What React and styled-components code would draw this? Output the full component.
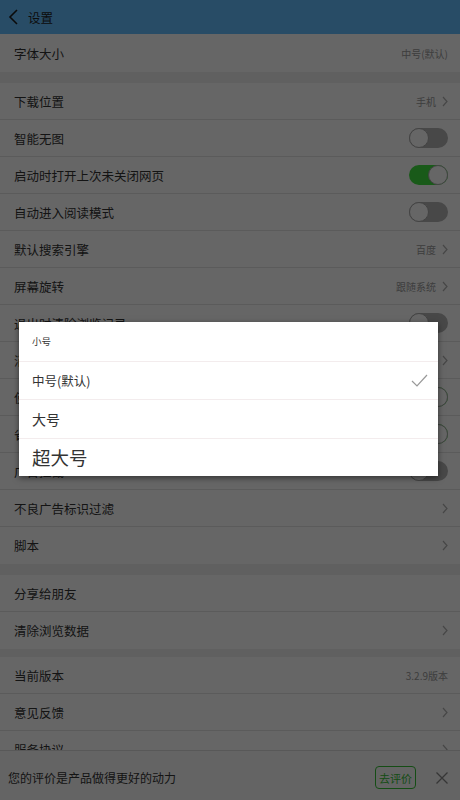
import styled, { createGlobalStyle } from "styled-components";

const GlobalStyle = createGlobalStyle`
  html, body {
    margin: 0;
    padding: 0;
  }
  body {
    width: 460px;
    height: 800px;
    overflow: hidden;
    background: #efefef;
    font-family: "Noto Sans CJK SC", "Noto Sans", sans-serif;
  }
`;

const Screen = styled.div`
  position: relative;
  width: 460px;
  height: 800px;
  display: flex;
  flex-direction: column;
  overflow: hidden;
  background: #efefef;
`;

const Header = styled.div`
  height: 34px;
  flex-shrink: 0;
  display: flex;
  align-items: center;
  gap: 10px;
  padding-left: 8px;
  background: #64bdff;
  color: #222;
  font-size: 12.5px;
  box-shadow: 0 1px 1px rgba(0, 0, 0, 0.12);
`;

const List = styled.div`
  flex: 1;
  overflow: hidden;
`;

const Section = styled.div`
  background: #fff;
  margin-bottom: ${(p) => p.$gap || 11}px;
`;

const Row = styled.div`
  box-sizing: border-box;
  height: ${(p) => (p.$tall ? 38 : 37)}px;
  display: flex;
  align-items: center;
  justify-content: space-between;
  padding: 0 12px 0 14px;
  border-bottom: 1px solid #e4e4e4;
  font-size: 12.5px;
  color: #333;

  &:last-child {
    border-bottom: none;
  }
`;

const Value = styled.span`
  display: flex;
  align-items: center;
  gap: 6px;
  font-size: 10px;
  color: #9a9a9a;
`;

const Toggle = styled.span`
  position: relative;
  width: 39px;
  height: 20px;
  border-radius: 10px;
  background: ${(p) => (p.$on ? "#3fe03f" : "#b3b3b3")};

  &::after {
    content: "";
    position: absolute;
    top: 0;
    ${(p) => (p.$on ? "right: 0;" : "left: 0;")}
    box-sizing: border-box;
    width: 20px;
    height: 20px;
    border-radius: 50%;
    background: #fff;
    border: 1px solid #a8a8a8;
  }
`;

const RateBar = styled.div`
  height: 50px;
  flex-shrink: 0;
  box-sizing: border-box;
  display: flex;
  align-items: center;
  padding: 4px 12px 0 8px;
  background: #fafafa;
  border-top: 1px solid #dcdcdc;
  font-size: 12px;
  color: #333;
`;

const RateText = styled.span`
  flex: 1;
`;

const RateButton = styled.span`
  box-sizing: border-box;
  height: 23px;
  padding: 0 3px;
  display: flex;
  align-items: center;
  border: 1.5px solid #35c035;
  border-radius: 4px;
  color: #35c035;
  font-size: 11px;
  margin-right: 20px;
`;

const Overlay = styled.div`
  position: absolute;
  inset: 0;
  background: rgba(0, 0, 0, 0.6);
`;

const Dialog = styled.div`
  position: absolute;
  left: 19px;
  top: 322px;
  width: 419px;
  background: #fff;
  box-shadow: 0 2px 6px rgba(0, 0, 0, 0.5);
`;

const Option = styled.div`
  box-sizing: border-box;
  height: 38.5px;
  display: flex;
  align-items: center;
  justify-content: space-between;
  padding: 0 10px 0 13px;
  border-top: 1px solid #f3eced;
  font-size: ${(p) => p.$size}px;
  color: #333;

  &:first-child {
    border-top: none;
  }
`;

const Chevron = () => (
  <svg width="6" height="11" viewBox="0 0 6 11">
    <polyline points="1,1 5,5.5 1,10" fill="none" stroke="#b0b0b0" strokeWidth="1.2" />
  </svg>
);

const BackIcon = () => (
  <svg width="10" height="16" viewBox="0 0 10 16">
    <polyline points="9,1 2,8 9,15" fill="none" stroke="#1d1d1d" strokeWidth="1.6" />
  </svg>
);

const Check = () => (
  <svg width="17" height="13" viewBox="0 0 17 13">
    <polyline points="1,7 6,12 16,1" fill="none" stroke="#999" strokeWidth="1.2" />
  </svg>
);

const Close = () => (
  <svg width="12" height="12" viewBox="0 0 12 12">
    <path d="M0.5 0.5 L11.5 11.5 M11.5 0.5 L0.5 11.5" stroke="#888" strokeWidth="1.3" />
  </svg>
);

const sections = [
  { gap: 11, tall: true, rows: [{ label: "字体大小", value: "中号(默认)" }] },
  {
    gap: 11,
    rows: [
      { label: "下载位置", value: "手机", arrow: true },
      { label: "智能无图", toggle: false },
      { label: "启动时打开上次未关闭网页", toggle: true },
      { label: "自动进入阅读模式", toggle: false },
      { label: "默认搜索引擎", value: "百度", arrow: true },
      { label: "屏幕旋转", value: "跟随系统", arrow: true },
      { label: "退出时清除浏览记录", toggle: false },
      { label: "消息推送设置", arrow: true },
      { label: "使用全屏模式", toggle: true },
      { label: "省流量模式", toggle: true },
      { label: "广告拦截", toggle: false },
      { label: "不良广告标识过滤", arrow: true },
      { label: "脚本", arrow: true },
    ],
  },
  {
    gap: 8,
    rows: [
      { label: "分享给朋友" },
      { label: "清除浏览数据", arrow: true },
    ],
  },
  {
    gap: 0,
    rows: [
      { label: "当前版本", value: "3.2.9版本" },
      { label: "意见反馈", arrow: true },
      { label: "服务协议", arrow: true },
    ],
  },
];

const sizes = [
  { label: "小号", size: 9.5 },
  { label: "中号(默认)", size: 12.5, checked: true },
  { label: "大号", size: 14 },
  { label: "超大号", size: 18.5 },
];

export default function App() {
  return (
    <>
      <GlobalStyle />
      <Screen>
        <Header>
          <BackIcon />
          <span>设置</span>
        </Header>
        <List>
          {sections.map((s, i) => (
            <Section key={i} $gap={s.gap}>
              {s.rows.map((r) => (
                <Row key={r.label} $tall={s.tall}>
                  <span>{r.label}</span>
                  {r.toggle !== undefined ? (
                    <Toggle $on={r.toggle} />
                  ) : (
                    <Value>
                      {r.value}
                      {r.arrow && <Chevron />}
                    </Value>
                  )}
                </Row>
              ))}
            </Section>
          ))}
        </List>
        <RateBar>
          <RateText>您的评价是产品做得更好的动力</RateText>
          <RateButton>去评价</RateButton>
          <Close />
        </RateBar>
        <Overlay />
        <Dialog>
          {sizes.map((o) => (
            <Option key={o.label} $size={o.size}>
              <span>{o.label}</span>
              {o.checked && <Check />}
            </Option>
          ))}
        </Dialog>
      </Screen>
    </>
  );
}
